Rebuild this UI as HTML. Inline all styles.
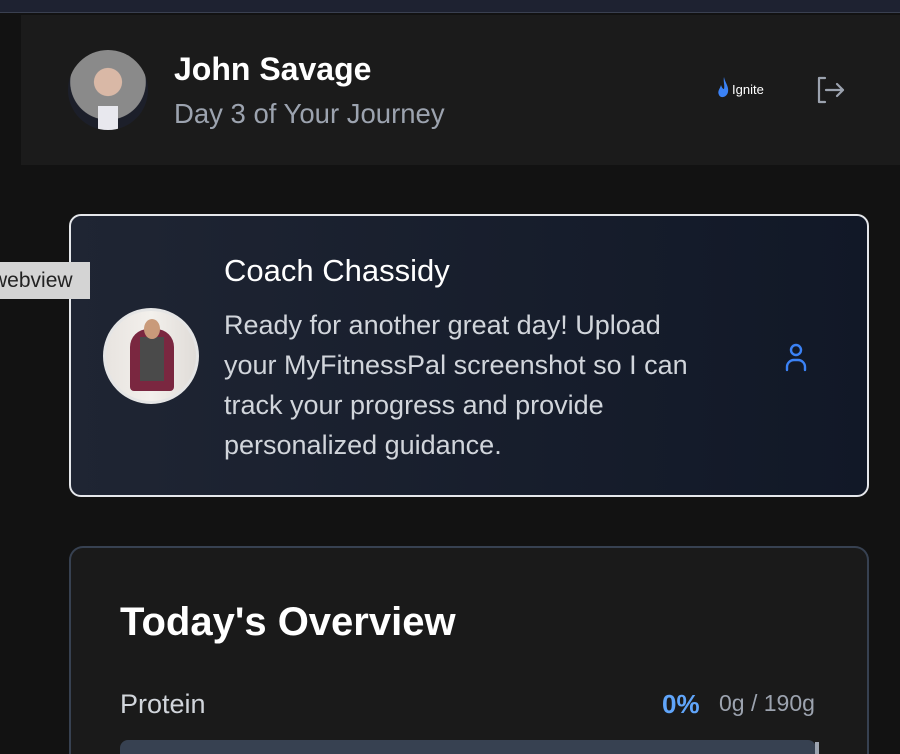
<!DOCTYPE html>
<html><head><style>
*{margin:0;padding:0;box-sizing:border-box}
html,body{width:900px;height:754px;overflow:hidden}
body{background:#121212;font-family:"Liberation Sans",sans-serif;position:relative}
.abs{position:absolute}
</style></head><body>
<div class="abs" style="left:0;top:0;width:900px;height:13px;background:#1e2231;border-bottom:1px solid #3a4050"></div>
<div class="abs" style="left:21px;top:15px;width:879px;height:150px;background:#1b1b1b"></div>
<div class="abs" style="left:68px;top:50px;width:80px;height:80px;border-radius:50%;background:radial-gradient(circle at 50% 40%,#d9b8a6 0 22%,#8a8a8a 23% 60%,#1c1f2a 61%);overflow:hidden">
 <div class="abs" style="left:30px;top:56px;width:20px;height:24px;background:#e8e8ee"></div>
</div>
<div class="abs" style="left:174px;top:51px;font-size:32px;font-weight:bold;color:#fff">John Savage</div>
<div class="abs" style="left:174px;top:98px;font-size:27.5px;color:#9ca3af">Day 3 of Your Journey</div>
<svg class="abs" style="left:716px;top:77px" width="14" height="22" viewBox="0 0 14 22"><path d="M8 0C9 6 13 9 12 15C11 20 5 22 3 18C1 14 4 12 5 8C6 11 7 12 8 12C9 8 7 4 8 0Z" fill="#3b82f6"/></svg>
<div class="abs" style="left:732px;top:82px;font-size:13px;color:#fff">Ignite</div>
<svg class="abs" style="left:815px;top:76px" width="30" height="28" viewBox="0 0 30 28" fill="none" stroke="#9ca3af" stroke-width="2.2" stroke-linecap="round" stroke-linejoin="round"><path d="M10 2H4v24h6"/><path d="M11 14h17M22 8l6 6-6 6"/></svg>

<div class="abs" style="left:69px;top:214px;width:800px;height:283px;border:2px solid #e5e7eb;border-radius:12px;background:linear-gradient(90deg,#1f2533,#111827)"></div>
<div class="abs" style="left:103px;top:308px;width:96px;height:96px;border-radius:50%;border:3px solid #e5e5e5;background:linear-gradient(90deg,#e8e4e0,#f3f0ec 50%,#e0dcd8);overflow:hidden">
 <div class="abs" style="left:24px;top:18px;width:44px;height:62px;border-radius:18px 18px 4px 4px;background:#7a2740"></div>
 <div class="abs" style="left:34px;top:26px;width:24px;height:44px;background:#4a4a4a"></div>
 <div class="abs" style="left:38px;top:8px;width:16px;height:20px;border-radius:50%;background:#c99a7a"></div>
</div>
<div class="abs" style="left:224px;top:253px;font-size:31px;color:#fff">Coach Chassidy</div>
<div class="abs" style="left:224px;top:305px;white-space:nowrap;font-size:27px;line-height:40px;color:#d1d5db">Ready for another great day! Upload<br>your MyFitnessPal screenshot so I can<br>track your progress and provide<br>personalized guidance.</div>
<svg class="abs" style="left:784px;top:342px" width="24" height="30" viewBox="0 0 24 30" fill="none" stroke="#3b82f6" stroke-width="2.4" stroke-linecap="round"><circle cx="12" cy="8" r="5"/><path d="M3 28v-3a7 7 0 0 1 7-7h4a7 7 0 0 1 7 7v3"/></svg>
<div class="abs" style="left:0;top:262px;width:90px;height:37px;background:#d4d4d4;font-size:21px;color:#222;line-height:37px;overflow:hidden;white-space:nowrap"><span style="margin-left:-8px">webview</span></div>

<div class="abs" style="left:69px;top:546px;width:800px;height:208px;border:2px solid #374151;border-bottom:none;border-radius:14px 14px 0 0;background:#1a1a1a"></div>
<div class="abs" style="left:120px;top:600px;font-size:40px;font-weight:bold;color:#fff">Today's Overview</div>
<div class="abs" style="left:120px;top:689px;font-size:27px;color:#d1d5db">Protein</div>
<div class="abs" style="left:662px;top:689px;font-size:26px;font-weight:bold;color:#60a5fa">0%</div>
<div class="abs" style="left:719px;top:690px;font-size:23px;color:#9ca3af">0g / 190g</div>
<div class="abs" style="left:120px;top:740px;width:696px;height:14px;border-radius:8px 8px 0 0;background:#374151"></div>
<div class="abs" style="left:815px;top:742px;width:4px;height:12px;background:#9ca3af"></div>
</body></html>
